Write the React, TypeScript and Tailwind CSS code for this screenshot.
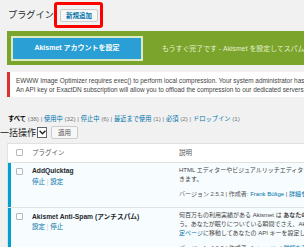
import React from 'react';

const font = "font-['Liberation_Sans','Noto_Sans_CJK_JP',sans-serif]";

function Check() {
  return <span className="block w-[7px] h-[7px] bg-white border border-[#b4b9be] rounded-[1px]" />;
}

export default function App() {
  return (
    <div className={`w-[304px] h-[247px] overflow-hidden bg-[#f1f1f1] text-[#444] ${font}`}>
      {/* Title + add new */}
      <div className="flex items-center pl-[8px] pt-[2px] h-[28px]">
        <h1 className="text-[9.2px] leading-[12px] text-[#23282d] whitespace-nowrap">プラグイン</h1>
        <div className="h-[26px] border-[3px] border-[#f00] rounded-[3px] pl-[3px] pr-[2px] pt-[4px]">
          <span className="flex items-center h-[13px] px-[5px] bg-[#f7f7f7] border border-[#ccc] rounded-[2px] text-[6.5px] font-semibold text-[#0073aa] whitespace-nowrap">
            新規追加
          </span>
        </div>
      </div>

      {/* Akismet banner */}
      <div className="ml-[7px] mt-[3px] h-[34px] bg-[#7ba42d] flex items-center pl-[4px] whitespace-nowrap overflow-hidden">
        <div className="w-[132px] h-[25px] shrink-0 border-2 border-[#dcebc4] bg-[#2a9fd6] flex items-center justify-center text-[7px] font-bold text-white">
          Akismet アカウントを設定
        </div>
        <span className="ml-[19px] mt-[3px] text-[6.9px] text-[#e6f2cf]">
          もうすぐ完了です - Akismet を設定してスパムから保護しましょう。
        </span>
      </div>

      {/* Notice */}
      <div className="ml-[7px] mt-[7px] h-[25px] bg-white border-l-[3px] border-[#dc3232] pl-[6px] pt-[4px] text-[6.4px] leading-[9px] text-[#444] whitespace-nowrap overflow-hidden">
        <p>EWWW Image Optimizer requires exec() to perform local compression. Your system administrator has disabled this function.</p>
        <p>An API key or ExactDN subscription will allow you to offload the compression to our dedicated servers instead.</p>
      </div>

      {/* Status filters */}
      <div className="ml-[8px] mt-[17px] text-[6.25px] leading-[9px] whitespace-nowrap text-[#72777c]">
        <span className="font-bold text-black">すべて</span> (38) | <span className="text-[#0073aa]">使用中</span> (32) |{' '}
        <span className="text-[#0073aa]">停止中</span> (6) | <span className="text-[#0073aa]">最近まで使用</span> (1) |{' '}
        <span className="text-[#0073aa]">必須</span> (2) | <span className="text-[#0073aa]">ドロップイン</span> (1)
      </div>

      {/* Bulk actions */}
      <div className="flex items-center mt-[3px] h-[13px]">
        <span className="text-[9px] leading-[12px] text-[#222] whitespace-nowrap">一括操作</span>
        <span className="ml-[1px] w-[10px] h-[11px] bg-white border border-[#666] flex items-center justify-center">
          <svg width="7" height="5" viewBox="0 0 7 5" fill="none" stroke="#222" strokeWidth="1.4">
            <path d="M0.6 0.8 L3.5 3.8 L6.4 0.8" />
          </svg>
        </span>
        <span className="ml-[4px] h-[13px] px-[6px] flex items-center bg-[#f7f7f7] border border-[#ccc] rounded-[2px] text-[6.5px] text-[#555]">
          適用
        </span>
      </div>

      {/* Plugins table */}
      <div className="ml-[7px] mt-[4px] border-l border-[#e1e1e1]">
        <div className="flex h-[20px] bg-white border-y border-[#e1e1e1] text-[6.5px] text-[#32373c] whitespace-nowrap">
          <div className="w-[24px] shrink-0 pl-[8px] pt-[5px]">
            <Check />
          </div>
          <div className="w-[147px] shrink-0 pt-[4px] leading-[9px] text-[#555]">プラグイン</div>
          <div className="flex-1 pt-[4px] leading-[9px] text-[#555]">説明</div>
        </div>

        {/* AddQuicktag */}
        <div className="flex h-[45px] bg-[#f7fcfe] border-b border-[#e1e1e1] whitespace-nowrap">
          <div className="w-[24px] shrink-0 pl-[8px] pt-[5px] shadow-[inset_3px_0_0_#00a0d2]">
            <Check />
          </div>
          <div className="w-[147px] shrink-0 pt-[3px]">
            <div className="text-[6.7px] leading-[9px] font-semibold text-[#23282d]">AddQuicktag</div>
            <div className="mt-[2px] text-[6.5px] leading-[9px] text-[#0073aa]">
              停止 <span className="text-[#ccc]">|</span> 設定
            </div>
          </div>
          <div className="flex-1 min-w-0 pt-[3px] text-[6px] leading-[9px] text-[#444] overflow-hidden">
            <p>HTML エディターやビジュアルリッチエディターで使うクイックタグを追加で</p>
            <p>きます。</p>
            <p className="mt-[6px] text-[#555]">
              バージョン 2.5.3 | 作成者: <span className="text-[#0073aa]">Frank Bültge</span> |{' '}
              <span className="text-[#0073aa]">詳細を表示</span>
            </p>
          </div>
        </div>

        {/* Akismet */}
        <div className="flex h-[60px] bg-[#f7fcfe] whitespace-nowrap">
          <div className="w-[24px] shrink-0 pl-[8px] pt-[5px] shadow-[inset_3px_0_0_#00a0d2]">
            <Check />
          </div>
          <div className="w-[147px] shrink-0 pt-[4px]">
            <div className="text-[6.7px] leading-[9px] font-semibold text-[#23282d]">Akismet Anti-Spam (アンチスパム)</div>
            <div className="mt-[1px] text-[6.5px] leading-[9px] text-[#0073aa]">
              設定 <span className="text-[#ccc]">|</span> 停止
            </div>
          </div>
          <div className="flex-1 min-w-0 pt-[3px] text-[6px] leading-[9px] text-[#444] overflow-hidden">
            <p>
              何百万もの利用実績がある Akismet は <b className="font-semibold">あなたのブログをスパムから保護する最良の方法でしょ</b>
            </p>
            <p>う。あなたが眠りについている瞬間でさえ、Akismet はサイトを守り続けます。Akismet 設</p>
            <p>
              <span className="text-[#0073aa]">定ページ</span>に移動してあなたの API キーを設定してください。
            </p>
            <p className="mt-[6px] text-[#555]">
              バージョン 4.0.3 | 作成者: <span className="text-[#0073aa]">Automattic</span> |{' '}
              <span className="text-[#0073aa]">詳細を表示</span>
            </p>
          </div>
        </div>
      </div>
    </div>
  );
}
